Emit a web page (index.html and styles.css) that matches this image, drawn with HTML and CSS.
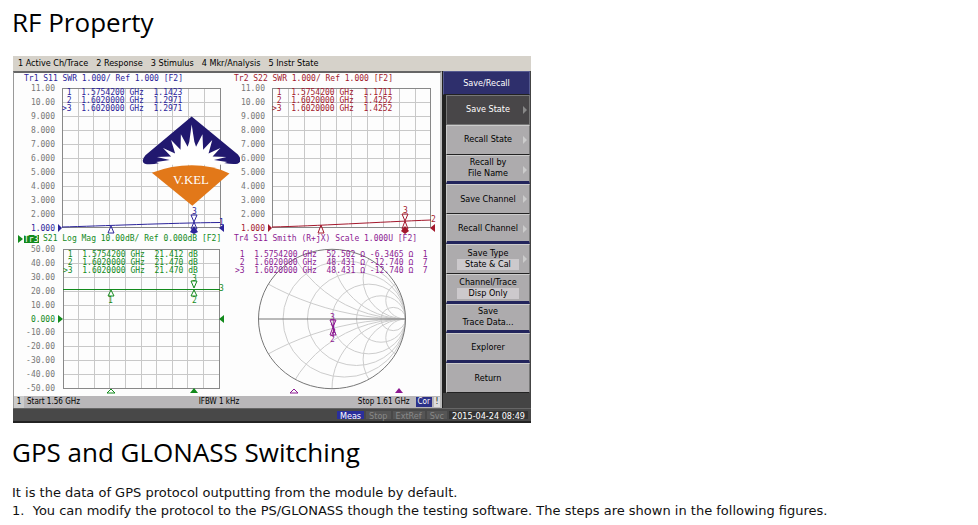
FILE: index.html
```html
<!DOCTYPE html>
<html lang="en">
<head>
<meta charset="utf-8">
<title>RF Property</title>
<link rel="stylesheet" href="styles.css">
</head>
<body>
<main class="article">
  <h2 class="heading">RF Property</h2>

  <figure class="analyzer">
    <nav class="menubar">
      <span>1 Active Ch/Trace</span>
      <span>2 Response</span>
      <span>3 Stimulus</span>
      <span>4 Mkr/Analysis</span>
      <span>5 Instr State</span>
    </nav>

    <div class="workspace">
      <section class="screen">
        <div class="plots">
          <svg class="plot blue" viewBox="16 73 211 160">
            <path class="grid" d="M62 102.5H220M62 116.5H220M62 130.5H220M62 144.5H220M62 158.5H220M62 172.5H220M62 186.5H220M62 200.5H220M62 214.5H220M78.5 88V228M93.5 88V228M109.5 88V228M125.5 88V228M141.5 88V228M157.5 88V228M172.5 88V228M188.5 88V228M204.5 88V228"/>
            <rect class="frame" x="62.5" y="88.5" width="158" height="139"/>
            <text x="24" y="81">Tr1 S11 SWR 1.000/ Ref 1.000 [F2]</text>
            <g class="scale">
              <text x="55" y="91">11.00</text><text x="55" y="105">10.00</text><text x="55" y="119">9.000</text><text x="55" y="133">8.000</text><text x="55" y="147">7.000</text><text x="55" y="161">6.000</text><text x="55" y="175">5.000</text><text x="55" y="189">4.000</text><text x="55" y="203">3.000</text><text x="55" y="217">2.000</text><text class="ref" x="55" y="231">1.000</text>
            </g>
            <text x="62" y="95"> 1  1.5754200 GHz  1.1423</text>
            <text x="62" y="103"> 2  1.6020000 GHz  1.2971</text>
            <text x="62" y="111">&gt;3  1.6020000 GHz  1.2971</text>
            <path class="trace" d="M62 227C100 226 170 223 220 222.500"/>
            <path class="trace" d="M108 233L111 226L114 233ZM191 215H197L194 222ZM194 222L197 229H191Z"/>
            <path class="solid" d="M58 224V232L62 228ZM224 224V232L219 228ZM190 232L194 226L198 232L194 234Z"/>
            <text x="192" y="214">3</text><text x="219" y="225">1</text>
          </svg>

          <svg class="plot red" viewBox="227 73 211 160">
            <path class="grid" d="M272 102.500H431M272 116.500H431M272 130.500H431M272 144.500H431M272 158.500H431M272 172.500H431M272 186.500H431M272 200.500H431M272 214.500H431M288.500 88V228M304.500 88V228M320.500 88V228M336.500 88V228M351.500 88V228M367.500 88V228M383.500 88V228M399.500 88V228M415.500 88V228"/>
            <rect class="frame" x="272.500" y="88.500" width="158" height="139"/>
            <text x="234" y="81">Tr2 S22 SWR 1.000/ Ref 1.000 [F2]</text>
            <g class="scale">
              <text x="265" y="91">11.00</text><text x="265" y="105">10.00</text><text x="265" y="119">9.000</text><text x="265" y="133">8.000</text><text x="265" y="147">7.000</text><text x="265" y="161">6.000</text><text x="265" y="175">5.000</text><text x="265" y="189">4.000</text><text x="265" y="203">3.000</text><text x="265" y="217">2.000</text><text class="ref" x="265" y="231">1.000</text>
            </g>
            <text x="272" y="95"> 1  1.5754200 GHz  1.1711</text>
            <text x="272" y="103"> 2  1.6020000 GHz  1.4252</text>
            <text x="272" y="111">&gt;3  1.6020000 GHz  1.4252</text>
            <path class="trace" d="M272 227C315 226 380 222 431 220"/>
            <path class="trace" d="M318 233L321 225L324 233ZM402 214H408L405 221ZM405 221L408 229H402Z"/>
            <path class="solid" d="M268 224V232L272 228ZM435 224V232L430 228ZM401 231L405 226L409 231L405 234Z"/>
            <text x="403" y="213">3</text><text x="431" y="222">2</text>
          </svg>

          <svg class="plot green" viewBox="16 233 211 163">
            <path class="grid" d="M63 263.500H220M63 277.500H220M63 291.500H220M63 305.500H220M63 319.500H220M63 332.500H220M63 346.500H220M63 360.500H220M63 374.500H220M78.500 250V388M94.500 250V388M109.500 250V388M125.500 250V388M141.500 250V388M156.500 250V388M172.500 250V388M187.500 250V388M203.500 250V388"/>
            <rect class="frame" x="63.500" y="249.500" width="156" height="139"/>
            <path class="solid" d="M18 235V243L23 239ZM24 235H39V243H24Z"/>
            <text class="inverse" x="24" y="242">Tr3</text>
            <text x="43" y="241">S21 Log Mag 10.00dB/ Ref 0.000dB [F2]</text>
            <g class="scale">
              <text x="55" y="252">50.00</text><text x="55" y="266">40.00</text><text x="55" y="280">30.00</text><text x="55" y="294">20.00</text><text x="55" y="308">10.00</text><text class="ref" x="55" y="322">0.000</text><text x="55" y="335">-10.00</text><text x="55" y="349">-20.00</text><text x="55" y="363">-30.00</text><text x="55" y="377">-40.00</text><text x="55" y="391">-50.00</text>
            </g>
            <text x="63" y="257"> 1  1.5754200 GHz  21.412 dB</text>
            <text x="63" y="265"> 2  1.6020000 GHz  21.470 dB</text>
            <text x="63" y="273">&gt;3  1.6020000 GHz  21.470 dB</text>
            <path class="trace" d="M63 289.500H220M108 296L111 290L114 296ZM191 281H197L194 288ZM191 296L194 290L197 296ZM107 393L111 389L115 393Z"/>
            <path class="solid" d="M58 315V323L63 319ZM224 315V323L219 319ZM190 393L194 388L198 393Z"/>
            <text x="108" y="303">1</text><text x="192" y="281">3</text><text x="192" y="303">2</text><text x="219" y="291">3</text>
          </svg>

          <svg class="plot purple" viewBox="227 233 211 163">
            <defs><clipPath id="unit"><circle r="1"/></clipPath></defs>
            <g class="smith" transform="translate(332 319) scale(73.500 69.700)">
              <g clip-path="url(#unit)">
                <circle cx="0.167" r="0.833"/><circle cx="0.333" r="0.667"/><circle cx="0.500" r="0.500"/><circle cx="0.667" r="0.333"/><circle cx="0.833" r="0.167"/>
                <circle cx="1" cy="-3.732" r="3.732"/><circle cx="1" cy="3.732" r="3.732"/>
                <circle cx="1" cy="-1.732" r="1.732"/><circle cx="1" cy="1.732" r="1.732"/>
                <circle cx="1" cy="-1" r="1"/><circle cx="1" cy="1" r="1"/>
                <circle cx="1" cy="-0.577" r="0.577"/><circle cx="1" cy="0.577" r="0.577"/>
                <circle cx="1" cy="-0.268" r="0.268"/><circle cx="1" cy="0.268" r="0.268"/>
              </g>
              <circle class="rim" r="1"/><path class="rim" d="M-1 0H1"/>
            </g>
            <text x="234" y="241">Tr4 S11 Smith (R+jX) Scale 1.000U [F2]</text>
            <text x="235" y="257"> 1  1.5754200 GHz  52.502 Ω -6.3465 Ω  1</text>
            <text x="235" y="265"> 2  1.6020000 GHz  48.431 Ω -12.740 Ω  7</text>
            <text x="235" y="273">&gt;3  1.6020000 GHz  48.431 Ω -12.740 Ω  7</text>
            <path class="trace" d="M330 320H336L333 327ZM330 335L333 327L336 335ZM331 324L335 330L332 334M334 319L333 337M290 393L294 389L298 393Z"/>
            <path class="solid" d="M395 393L399 388L403 393Z"/>
            <text x="330" y="320">3</text><text x="331" y="333">1</text><text x="330" y="342">2</text>
          </svg>

          <svg class="logo" viewBox="-4 0 300 280">
            <path fill="#21186f" d="M155 13L292 126Q308 146 291 153Q278 156 250 151H60Q30 158 16 153Q3 146 18 128Z"/>
            <path fill="#fff" d="M50 148L90 142L52 133L94 132L70 107L106 123L94 83L122 112L123 66L143 103L148 88L155 37L163 88L168 103L187 66L189 112L216 83L205 123L240 107L217 132L258 133L221 142L260 148L240 156H68Z"/>
            <path fill="#e27819" d="M37 180Q96 158 155 158Q216 158 267 182L157 278Z"/>
            <text x="153" y="213">V.KEL</text>
          </svg>
        </div>
        <div class="channel">
          <span class="number">1</span>
          <span>Start 1.56 GHz</span>
          <span class="ifbw">IFBW 1 kHz</span>
          <span class="stop">Stop 1.61 GHz</span>
          <span class="cor">Cor</span>
          <span class="alert">!</span>
        </div>
      </section>

      <aside class="softkeys">
        <h3 class="title">Save/Recall</h3>
        <div class="keys">
          <button class="key active more">Save State</button>
          <button class="key more">Recall State</button>
          <button class="key more last">Recall by<br>File Name</button>
          <button class="key more">Save Channel</button>
          <button class="key more last">Recall Channel</button>
          <button class="key more">Save Type<span class="value">State &amp; Cal</span></button>
          <button class="key last">Channel/Trace<span class="value">Disp Only</span></button>
          <button class="key last">Save<br>Trace Data...</button>
          <button class="key last">Explorer</button>
          <button class="key">Return</button>
        </div>
      </aside>
    </div>

    <footer class="status">
      <span class="on">Meas</span>
      <span>Stop</span>
      <span>ExtRef</span>
      <span>Svc</span>
      <time class="clock">2015-04-24 08:49</time>
    </footer>
  </figure>

  <h2 class="heading">GPS and GLONASS Switching</h2>
  <p class="text">It is the data of GPS protocol outputting from the module by default.</p>
  <p class="text">1.&nbsp; You can modify the protocol to the PS/GLONASS though the testing software. The steps are shown in the following figures.</p>
</main>
</body>
</html>
```
FILE: styles.css
```css
* { box-sizing: border-box; }
body {
  margin: 0;
  background: #fff;
  color: #000;
  font-family: "DejaVu Sans", sans-serif;
}
.article { padding: 3px 12px 0; }
.heading {
  margin: 0 0 13px;
  font: 400 26px/38px "Open Sans", sans-serif;
}
.text {
  margin: 0;
  font-size: 13px;
  line-height: 18px;
  color: #111;
}

.analyzer {
  max-width: 518px;
  margin: 15px 0 10px 1px;
  background: #484848;
  font: 9px/11px "DejaVu Sans Condensed", "DejaVu Sans", sans-serif;
}
.menubar {
  display: flex;
  gap: 8px;
  height: 15px;
  padding: 0 5px;
  background: #d6d2ca;
  line-height: 15px;
  white-space: nowrap;
}
.workspace { display: flex; }
.screen {
  flex: 1;
  min-width: 0;
  padding: 0 2px;
  background: #fdfdfd;
  border-top: 2px solid #666;
  border-left: 1px solid #999;
  border-right: 2px solid #bbb;
}
.plots {
  position: relative;
  display: grid;
  grid-template-columns: 1fr 1fr;
}
.plot { display: block; width: 100%; overflow: visible; }
.plot text {
  font: 8px "DejaVu Sans Mono", monospace;
  white-space: pre;
  fill: currentColor;
}
.blue { color: #2b249a; }
.red { color: #a3182c; }
.green { color: #128a1c; }
.purple { color: #8c1a92; }
.plot .scale text { text-anchor: end; fill: #777; }
.plot .scale .ref { fill: currentColor; }
.plot .inverse { fill: #fff; }
.grid { stroke: #c8c8c8; fill: none; }
.frame { stroke: #888; fill: none; }
.trace { stroke: currentColor; fill: none; }
.solid { fill: currentColor; }
.smith circle, .smith path {
  fill: none;
  stroke: #ccc;
  vector-effect: non-scaling-stroke;
}
.smith .rim { stroke: #777; }
.logo {
  position: absolute;
  left: 29%;
  top: 12%;
  width: 24%;
}
.logo text {
  font: 38px "Liberation Serif", serif;
  text-anchor: middle;
  fill: #fff;
}
.channel {
  display: flex;
  align-items: center;
  height: 12px;
  margin: 0 -2px;
  background: #b9b7b9;
  font-size: 8px;
  line-height: 12px;
  white-space: nowrap;
}
.number { width: 10px; margin-right: 3px; text-align: center; background: #ccc; }
.ifbw { margin: 0 auto; }
.cor { margin: 0 2px 0 6px; padding: 0 2px; background: #2c3188; color: #fff; line-height: 10px; }
.alert { width: 6px; background: #ddd; text-align: center; line-height: 10px; }

.softkeys {
  flex: 0 0 89px;
  display: flex;
  flex-direction: column;
  padding: 0 1px 15px 0;
  background: #444;
  border-left: 1px solid #222;
}
.title {
  margin: 0;
  height: 24px;
  background: #2e2f6c;
  border: 1px solid #555a90;
  border-bottom-color: #222;
  color: #fff;
  font: inherit;
  line-height: 22px;
  text-align: center;
}
.keys {
  flex: 1;
  display: flex;
  flex-direction: column;
  padding-left: 3px;
  background: #222;
}
.key {
  position: relative;
  flex: 1 1 10px;
  min-height: 0;
  padding: 0;
  background: #adabad;
  border: 1px solid #ccc;
  border-right-color: #777;
  border-bottom: 1px solid #222;
  color: #000;
  font: inherit;
}
.key.last { border-bottom: 3px solid #22245c; }
.key.active { background: #484648; border-color: #777; color: #fff; }
.key.more::after {
  content: "";
  position: absolute;
  right: 2px;
  top: 10px;
  border: 4px solid transparent;
  border-left-color: #ccc;
  border-right-width: 0;
}
.key.active::after { border-left-color: #888; }
.value {
  display: block;
  width: 62px;
  margin: 0 auto;
  background: #ccc9cc;
}
.status {
  display: flex;
  justify-content: flex-end;
  gap: 2px;
  height: 15px;
  padding: 2px 3px;
  border-top: 1px solid #666;
  border-bottom: 2px solid #222;
  color: #888;
}
.status > * { padding: 0 3px; background: #555; }
.status .on { background: #2a2f9c; color: #fff; }
.status .clock { background: #333; color: #fff; }
```
